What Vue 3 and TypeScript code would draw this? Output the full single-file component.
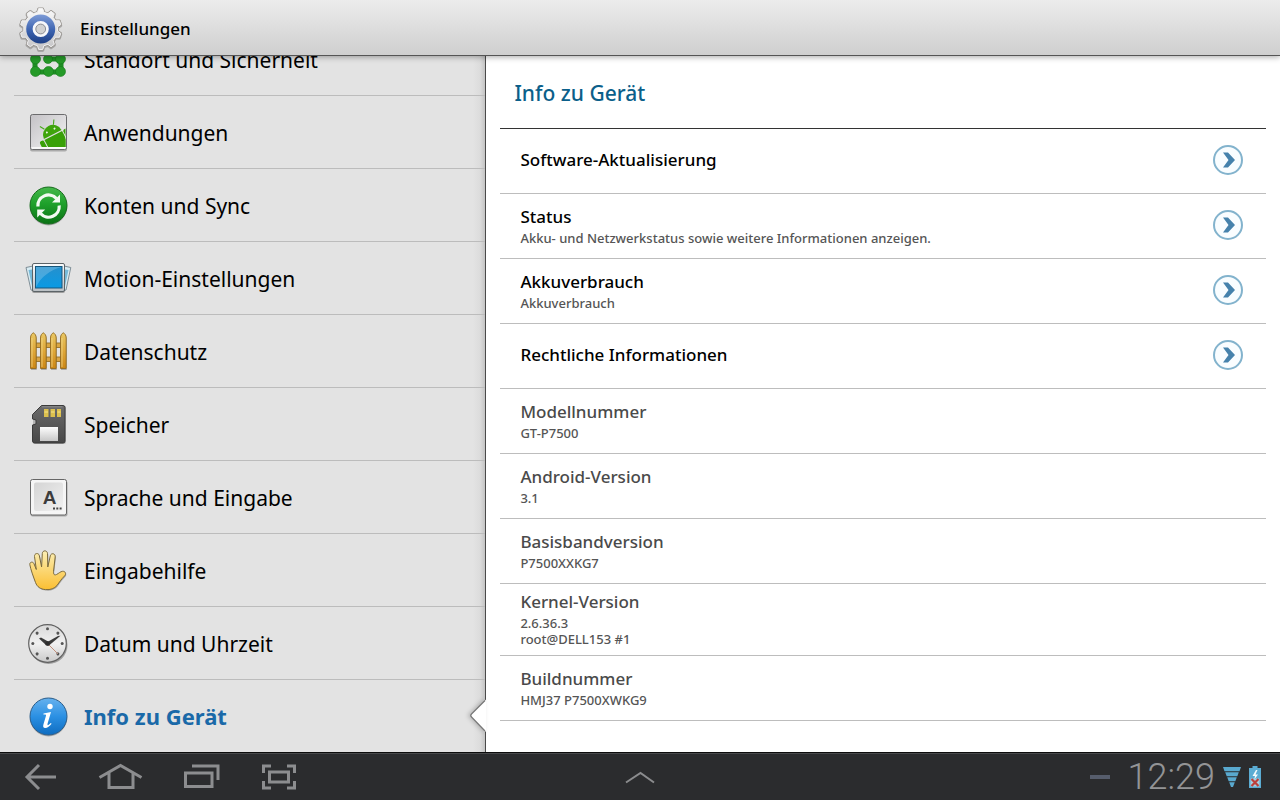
<script setup lang="ts">
import { ref } from 'vue'

interface Category {
  id: string
  label: string
}

interface Entry {
  title: string
  lines: string[]
  link: boolean
}

const categories: Category[] = [
  { id: 'security', label: 'Standort und Sicherheit' },
  { id: 'apps', label: 'Anwendungen' },
  { id: 'sync', label: 'Konten und Sync' },
  { id: 'motion', label: 'Motion-Einstellungen' },
  { id: 'privacy', label: 'Datenschutz' },
  { id: 'storage', label: 'Speicher' },
  { id: 'language', label: 'Sprache und Eingabe' },
  { id: 'access', label: 'Eingabehilfe' },
  { id: 'time', label: 'Datum und Uhrzeit' },
  { id: 'about', label: 'Info zu Gerät' },
]

const entries: Entry[] = [
  { title: 'Software-Aktualisierung', lines: [], link: true },
  { title: 'Status', lines: ['Akku- und Netzwerkstatus sowie weitere Informationen anzeigen.'], link: true },
  { title: 'Akkuverbrauch', lines: ['Akkuverbrauch'], link: true },
  { title: 'Rechtliche Informationen', lines: [], link: true },
  { title: 'Modellnummer', lines: ['GT-P7500'], link: false },
  { title: 'Android-Version', lines: ['3.1'], link: false },
  { title: 'Basisbandversion', lines: ['P7500XXKG7'], link: false },
  { title: 'Kernel-Version', lines: ['2.6.36.3', 'root@DELL153 #1'], link: false },
  { title: 'Buildnummer', lines: ['HMJ37 P7500XWKG9'], link: false },
]

const selected = ref('about')

// Outline of the cog: ten teeth round a circle
function cog(cx: number, cy: number, outer: number, inner: number, teeth: number): string {
  const step = (Math.PI * 2) / teeth
  const points: string[] = []
  const shape: [number, number][] = [
    [-0.3, inner],
    [-0.16, outer],
    [0.16, outer],
    [0.3, inner],
  ]
  for (let i = 0; i < teeth; i++) {
    for (const [offset, radius] of shape) {
      const a = (i + offset) * step - Math.PI / 2
      points.push(`${(cx + radius * Math.cos(a)).toFixed(2)} ${(cy + radius * Math.sin(a)).toFixed(2)}`)
    }
  }
  return `M${points.join('L')}Z`
}

const cogPath = cog(24.7, 24, 20.5, 17, 10)
const clockMarks = [0, 45, 90, 135, 180, 225, 270, 315]
const pickets = [6, 16, 26, 36]
</script>

<template>
  <div class="screen">
    <header class="topbar">
      <svg class="topbar-icon" viewBox="0 0 48 48" aria-hidden="true">
        <defs>
          <linearGradient id="cogMetal" x1="0" y1="0" x2="0" y2="1">
            <stop offset="0" stop-color="#fafafa" />
            <stop offset="1" stop-color="#c4c4c6" />
          </linearGradient>
          <linearGradient id="cogBlue" x1="0" y1="0" x2="0" y2="1">
            <stop offset="0" stop-color="#7d9bd6" />
            <stop offset="0.55" stop-color="#3c63b0" />
            <stop offset="1" stop-color="#1d3f85" />
          </linearGradient>
        </defs>
        <path :d="cogPath" fill="none" stroke="#8a8a8a" stroke-width="3" stroke-linejoin="round" transform="translate(0 1)" opacity="0.6" />
        <path :d="cogPath" fill="url(#cogMetal)" stroke="#999590" stroke-width="2.4" stroke-linejoin="round" />
        <path :d="cogPath" fill="url(#cogMetal)" stroke="#f2f2f3" stroke-width="1" stroke-linejoin="round" />
        <circle cx="24.7" cy="24" r="14.5" fill="url(#cogBlue)" />
        <circle cx="24.7" cy="24" r="6.4" fill="#cfcfd1" stroke="#f7f8fb" stroke-width="3.4" />
        <circle cx="24.7" cy="24" r="4.9" fill="#d2d2d2" stroke="#8d8f96" stroke-width="1" />
      </svg>
      <h1 class="topbar-title">Einstellungen</h1>
    </header>

    <main class="body">
      <nav class="sidebar" aria-label="Kategorien">
        <ul class="categories">
          <li v-for="item in categories" :key="item.id" class="category">
            <button
              type="button"
              class="category-button"
              :class="{ selected: item.id === selected }"
              :aria-current="item.id === selected ? 'page' : undefined"
              @click="selected = item.id"
            >
              <svg class="category-icon" viewBox="0 0 48 48" aria-hidden="true">
                <g v-if="item.id === 'security'">
                  <path d="M11 11V37H37V24H24M11 11H37" fill="none" stroke="#1f8f24" stroke-width="5" />
                  <g fill="#259a28" stroke="#14781a" stroke-width="0.6">
                    <circle cx="11" cy="11" r="5" /><circle cx="24" cy="11" r="5" /><circle cx="37" cy="11" r="5" />
                    <circle cx="11.5" cy="24" r="5" /><circle cx="24" cy="24" r="4.5" /><circle cx="36.500" cy="24" r="5" />
                    <circle cx="11.5" cy="36.500" r="5" /><circle cx="24.5" cy="36.500" r="5" /><circle cx="36.500" cy="36.500" r="5" />
                  </g>
                </g>

                <g v-else-if="item.id === 'apps'">
                  <defs>
                    <linearGradient id="appTile" x1="0" y1="0" x2="1" y2="1">
                      <stop offset="0" stop-color="#c3c1c5" />
                      <stop offset="1" stop-color="#f6f6f6" />
                    </linearGradient>
                    <clipPath id="appClip"><rect x="7.5" y="7" width="34" height="32" /></clipPath>
                  </defs>
                  <rect x="6" y="7.5" width="37" height="36" rx="2" fill="#000" opacity="0.25" />
                  <rect x="6.5" y="6.5" width="36" height="35" rx="2" fill="url(#appTile)" stroke="#6b6b6d" />
                  <path d="M7.5 40H41.5" stroke="#fff" stroke-width="1.500" />
                  <g clip-path="url(#appClip)">
                    <g transform="translate(29 27) rotate(-27) scale(1.12)">
                      <path d="M-8.800 -0.600A8.800 8.400 0 0 1 8.800 -0.600Z" fill="#3fa40c" />
                      <path d="M-4.500 -8L-7 -12M4.500 -8L7 -12" stroke="#4aa81c" stroke-width="1" />
                      <circle cx="-3.800" cy="-4.500" r="0.900" fill="#e9f5df" />
                      <circle cx="3.800" cy="-4.500" r="0.900" fill="#e9f5df" />
                      <path d="M-8.800 0.600H8.800V17H-8.800Z" fill="#39a008" />
                      <rect x="-13.800" y="0" width="4.200" height="14" rx="2" fill="#39a008" />
                      <rect x="9.600" y="0" width="4.600" height="16" rx="2" fill="#39a008" />
                    </g>
                    <path d="M24 39H44V30Z" fill="#39a008" />
                  </g>
                </g>

                <g v-else-if="item.id === 'sync'">
                  <defs>
                    <linearGradient id="syncDisc" x1="0" y1="0" x2="0" y2="1">
                      <stop offset="0" stop-color="#46b84b" />
                      <stop offset="0.45" stop-color="#1fa12b" />
                      <stop offset="1" stop-color="#0b7215" />
                    </linearGradient>
                  </defs>
                  <circle cx="24.5" cy="26" r="18.500" fill="#000" opacity="0.25" />
                  <circle cx="24.5" cy="24.5" r="18.500" fill="url(#syncDisc)" stroke="#166b1c" />
                  <g fill="none" stroke="#f3faf2" stroke-width="3.200">
                    <path d="M13.900 25.500A10.700 10.700 0 0 1 32.500 17.500" />
                    <path d="M35.200 24.500A10.700 10.700 0 0 1 16.500 32.500" />
                  </g>
                  <path d="M36 13.500V21.500H28Z" fill="#f3faf2" />
                  <path d="M13.200 36.500V28.500H21.200Z" fill="#f3faf2" />
                </g>

                <g v-else-if="item.id === 'motion'">
                  <defs>
                    <linearGradient id="motionScreen" x1="0" y1="0" x2="0" y2="1">
                      <stop offset="0" stop-color="#2590cd" />
                      <stop offset="1" stop-color="#0a9ae4" />
                    </linearGradient>
                    <linearGradient id="motionFrame" x1="0" y1="0" x2="0" y2="1">
                      <stop offset="0" stop-color="#fbfdfe" />
                      <stop offset="1" stop-color="#b9bfc3" />
                    </linearGradient>
                  </defs>
                  <path d="M2 13.500L9 12V36.500L7 36Z" fill="#d8ecf3" stroke="#75858d" stroke-width="0.900" />
                  <path d="M46.800 13.500L40 12V36.500L42 36Z" fill="#d8ecf3" stroke="#75858d" stroke-width="0.900" />
                  <path d="M4.500 16L8 15.500V32ZM44.500 16L41 15.500V32Z" fill="#77bad8" />
                  <rect x="8" y="11" width="33" height="28" rx="2" fill="#000" opacity="0.3" />
                  <rect x="8.500" y="9.500" width="32" height="28" rx="1.500" fill="url(#motionFrame)" stroke="#5c6468" />
                  <rect x="11.500" y="12.500" width="26.500" height="21.500" fill="url(#motionScreen)" stroke="#17577c" />
                  <path d="M12 33V13H37.500C26 16 17 23 12 33Z" fill="#fff" opacity="0.2" />
                </g>

                <g v-else-if="item.id === 'privacy'">
                  <defs>
                    <linearGradient id="fenceWood" x1="0" y1="0" x2="0" y2="1">
                      <stop offset="0" stop-color="#e9c763" />
                      <stop offset="0.5" stop-color="#dfa83a" />
                      <stop offset="1" stop-color="#cc8614" />
                    </linearGradient>
                  </defs>
                  <g fill="#d9a644" stroke="#94702c" stroke-width="0.900">
                    <rect x="9" y="16" width="31" height="4.500" />
                    <rect x="9" y="30" width="31" height="4.500" />
                  </g>
                  <g v-for="x in pickets" :key="x" :transform="`translate(${x} 0)`">
                    <path d="M0.500 11C0.500 8 2 6.500 3.300 5.800C4.600 6.500 6.200 8 6.200 11V42H0.500Z" transform="translate(0.500 1)" fill="#000" opacity="0.25" />
                    <path d="M0.500 11C0.500 8 2 6.500 3.300 5.800C4.600 6.500 6.200 8 6.200 11V41.500H0.500Z" fill="url(#fenceWood)" stroke="#916a20" stroke-width="0.900" />
                    <path d="M2 11V40" stroke="#f2dc92" stroke-width="1" opacity="0.700" />
                  </g>
                </g>

                <g v-else-if="item.id === 'storage'">
                  <defs>
                    <linearGradient id="cardBody" x1="0" y1="0" x2="0" y2="1">
                      <stop offset="0" stop-color="#6b6b6b" />
                      <stop offset="1" stop-color="#474747" />
                    </linearGradient>
                    <linearGradient id="cardLabel" x1="0" y1="0" x2="0" y2="1">
                      <stop offset="0" stop-color="#fdfdfd" />
                      <stop offset="1" stop-color="#c7c7c7" />
                    </linearGradient>
                  </defs>
                  <path d="M17 6H40Q42 6 42 8V42Q42 44 40 44H11Q9 44 9 42V14Z" fill="#000" opacity="0.2" />
                  <path d="M17.500 5.500H39Q41 5.500 41 7.500V41Q41 43 39 43H10.500Q8.500 43 8.500 41V25L12 24V20L8.500 19V14.500Z" fill="url(#cardBody)" stroke="#3b3b3b" />
                  <path d="M18 6.800H38.500" stroke="#8f8f8f" />
                  <path d="M20 9H24.500V17H20ZM26.500 9H31V17H26.500ZM33 9H37V17H33Z" fill="#dcc04e" />
                  <path d="M20.500 12H24M27 12H30.500M33.500 12H36.500" stroke="#f5e48d" />
                  <rect x="16" y="27" width="18" height="14" fill="url(#cardLabel)" />
                </g>

                <g v-else-if="item.id === 'language'">
                  <defs>
                    <linearGradient id="keyFace" x1="0" y1="0" x2="1" y2="1">
                      <stop offset="0" stop-color="#d4d4d4" />
                      <stop offset="1" stop-color="#f1f1f1" />
                    </linearGradient>
                  </defs>
                  <rect x="6.500" y="8" width="37" height="35.500" rx="2" fill="#000" opacity="0.25" />
                  <rect x="6.500" y="6.500" width="36" height="35.500" rx="2" fill="#f5f5f5" stroke="#666" />
                  <rect x="10" y="9.500" width="29" height="28.500" rx="2" fill="url(#keyFace)" />
                  <text x="25.500" y="31" class="key-letter">A</text>
                  <path d="M29 34.500H31V36.500H29ZM32.300 34.500H34.300V36.500H32.300ZM35.600 34.500H37.600V36.500H35.600Z" fill="#444" />
                </g>

                <g v-else-if="item.id === 'access'">
                  <defs>
                    <linearGradient id="handSkin" x1="0" y1="0" x2="0" y2="1">
                      <stop offset="0" stop-color="#fbeeb4" />
                      <stop offset="1" stop-color="#fbbf32" />
                    </linearGradient>
                  </defs>
                  <path
                    d="M11.500 36.500C9.500 31 6.500 23 5.800 18.500C5.500 15.800 9 15.400 9.900 17.500L12.300 23.500L10.500 10.500C10.200 7 14.600 6.500 15.300 9.500L17.600 21L18.300 7.500C18.500 4 23.300 4 23.500 7.500L23.800 21L26.300 9.800C27.100 6.600 31.500 7.300 31.200 10.800L29.500 25.500C29.300 28.500 30.500 29.500 32.500 28.500C35 27.200 36.500 25.500 38.500 25.300C41.500 25 42.600 28 40.500 30C37 33.500 35.500 36 33 39.500C30.500 42.500 26.500 44 21.500 43.600C16.500 43.200 13.200 41 11.500 36.500Z"
                    transform="translate(0.700 1)" fill="#000" opacity="0.25"
                  />
                  <path
                    d="M11.500 36.500C9.500 31 6.500 23 5.800 18.500C5.500 15.800 9 15.400 9.900 17.500L12.300 23.500L10.500 10.500C10.200 7 14.600 6.500 15.300 9.500L17.600 21L18.300 7.500C18.500 4 23.300 4 23.500 7.500L23.800 21L26.300 9.800C27.100 6.600 31.500 7.300 31.200 10.800L29.500 25.500C29.300 28.500 30.500 29.500 32.500 28.500C35 27.200 36.500 25.500 38.500 25.300C41.500 25 42.600 28 40.500 30C37 33.500 35.500 36 33 39.500C30.500 42.500 26.500 44 21.500 43.600C16.500 43.200 13.200 41 11.500 36.500Z"
                    fill="url(#handSkin)" stroke="#7b6a3c" stroke-width="1" stroke-linejoin="round"
                  />
                </g>

                <g v-else-if="item.id === 'time'">
                  <defs>
                    <linearGradient id="dial" x1="0" y1="0" x2="0" y2="1">
                      <stop offset="0" stop-color="#d9d9d9" />
                      <stop offset="0.500" stop-color="#f1f1f1" />
                      <stop offset="1" stop-color="#c9c9c9" />
                    </linearGradient>
                  </defs>
                  <circle cx="24.5" cy="26" r="19" fill="#000" opacity="0.3" />
                  <circle cx="23.500" cy="24.500" r="18.800" fill="url(#dial)" stroke="#606060" stroke-width="1.200" />
                  <circle v-for="a in clockMarks" :key="a" cx="23.500" cy="9.800" r="1.500" fill="#555" :transform="`rotate(${a} 23.5 24.5)`" />
                  <path d="M23.500 24.500L34 35" stroke="#c08d78" stroke-width="1" />
                  <path d="M25 23L17 18.500L15 19.500L22.500 26.500Z" fill="#3b3b3b" />
                  <path d="M22.500 23.500L34 17L36.500 16.800L25 26.500L23.500 27Z" fill="#3b3b3b" />
                  <circle cx="23.500" cy="24.500" r="2.300" fill="#2d2d2d" />
                </g>

                <g v-else>
                  <defs>
                    <linearGradient id="infoDisc" x1="0" y1="0" x2="0" y2="1">
                      <stop offset="0" stop-color="#67b2ee" />
                      <stop offset="0.500" stop-color="#2b90e3" />
                      <stop offset="1" stop-color="#0e6cc0" />
                    </linearGradient>
                  </defs>
                  <circle cx="24.5" cy="26" r="18.500" fill="#000" opacity="0.25" />
                  <circle cx="24.5" cy="24.500" r="18.500" fill="url(#infoDisc)" stroke="#2b5d8a" />
                  <circle cx="26" cy="14.500" r="2.700" fill="#fff" />
                  <path d="M19.500 21.500L27 20L23.600 31.500C23.200 33.200 23.800 33.500 24.700 32.800L26.800 31L27.600 31.800C25.500 34.500 23.500 36 21.200 36C19.300 36 18.800 34.600 19.400 32.500L22 23.800C22.300 22.600 21.500 22.300 19.400 22.500Z" fill="#fff" />
                </g>
              </svg>
              <span class="category-label">{{ item.label }}</span>
            </button>
            <svg v-if="item.id === selected" class="pointer" viewBox="0 0 20 40" aria-hidden="true">
              <path d="M20 3.500L5.500 18Q4 19.500 5.500 21L20 36Z" fill="#fff" />
              <path d="M19 4.500L5.500 18Q4 19.500 5.500 21L19 35" fill="none" stroke="#777" stroke-width="1.200" />
            </svg>
          </li>
        </ul>
      </nav>

      <section class="detail">
        <h2 class="detail-title">Info zu Gerät</h2>
        <ul class="entries">
          <li v-for="entry in entries" :key="entry.title" class="entry">
            <component :is="entry.link ? 'button' : 'div'" :type="entry.link ? 'button' : undefined" class="entry-row" :class="{ linked: entry.link }">
              <span class="entry-text">
                <span class="entry-title">{{ entry.title }}</span>
                <span v-for="line in entry.lines" :key="line" class="entry-line">{{ line }}</span>
              </span>
              <svg v-if="entry.link" class="chevron" viewBox="0 0 32 32" aria-hidden="true">
                <circle cx="16" cy="16" r="14" fill="#f9fdff" stroke="#83b3cd" stroke-width="2" />
                <path d="M11 8.500H16L23 16L16 23.500H11L16.500 16Z" fill="#4682ac" />
              </svg>
            </component>
          </li>
        </ul>
      </section>
    </main>

    <footer class="systembar">
      <div class="nav-buttons">
        <button type="button" class="nav-button" aria-label="Zurück">
          <svg class="nav-icon" viewBox="0 0 48 32"><path d="M23 4L11 16L23 28M11 16H40" /></svg>
        </button>
        <button type="button" class="nav-button" aria-label="Startseite">
          <svg class="nav-icon" viewBox="0 0 48 32"><path d="M3.500 16.500L24.500 4.500L45.500 16.500M13 12V26.500H37V12" /></svg>
        </button>
        <button type="button" class="nav-button" aria-label="Letzte Anwendungen">
          <svg class="nav-icon" viewBox="0 0 48 32"><path d="M16 5H42V19M9.500 12H36V25.500H9.500Z" /></svg>
        </button>
        <button type="button" class="nav-button" aria-label="Bildschirmfoto">
          <svg class="nav-icon" viewBox="0 0 48 32">
            <path d="M7.500 12V5H15M31 5H38.500V12M38.500 20V27H31M15 27H7.500V20M13.500 11H32.500V21H13.500Z" />
          </svg>
        </button>
      </div>

      <button type="button" class="drawer-button" aria-label="Mini-Anwendungen">
        <svg class="drawer-icon" viewBox="0 0 32 16"><path d="M2 13.500L16.500 4L30 13.500" /></svg>
      </button>

      <div class="status">
        <span class="dash"></span>
        <time class="clock">12:29</time>
        <svg class="signal" viewBox="0 0 18 20" aria-hidden="true">
          <path d="M0 0H18L16.500 4.200H1.500ZM2.200 5.200H15.800L14.300 9.200H3.700ZM4.200 10.200H13.800L12.300 14.200H5.700ZM6.200 15.200H11.800L10 20H8Z" fill="#59a9cf" />
        </svg>
        <svg class="battery" viewBox="0 0 12 22" aria-hidden="true">
          <path d="M3.500 0H8.500V2H12V22H0V2H3.500Z" fill="#5bacd3" />
          <path d="M7 4L3.500 10H6L5 14L9 8.500H6.500L8.500 4Z" fill="#f4fafc" />
          <rect x="1.500" y="12.500" width="9" height="8" fill="#a9cfdf" />
          <path d="M2.500 13L9.500 20M9.500 13L2.500 20" stroke="#bd3f3b" stroke-width="2.200" />
        </svg>
      </div>
    </footer>
  </div>
</template>

<style>
html,
body {
  margin: 0;
  background: #fff;
}
</style>

<style scoped>
.screen {
  display: flex;
  flex-direction: column;
  height: 100vh;
  overflow: hidden;
  color: #000;
  font-family: 'Noto Sans', 'Open Sans', sans-serif;
}

button {
  margin: 0;
  padding: 0;
  border: 0;
  background: none;
  color: inherit;
  font: inherit;
  text-align: left;
  cursor: pointer;
}

ul {
  margin: 0;
  padding: 0;
  list-style: none;
}

svg {
  display: block;
  flex: none;
}

.topbar {
  position: relative;
  z-index: 2;
  display: flex;
  align-items: center;
  gap: 16px;
  box-sizing: border-box;
  height: 56px;
  padding: 2px 16px 0;
  border-bottom: 1px solid #555;
  background: linear-gradient(#ececec, #cfcfcf);
  box-shadow: 0 1px 6px rgba(0, 0, 0, 0.35);
}

.topbar-icon {
  width: 48px;
  height: 48px;
}

.topbar-title {
  margin: 0;
  font-size: 17px;
  font-weight: 500;
}

.body {
  display: flex;
  flex: 1;
  min-height: 0;
}

.sidebar {
  display: flex;
  flex: 0 0 38%;
  flex-direction: column;
  justify-content: flex-end;
  box-sizing: border-box;
  border-right: 1px solid #4a4a4a;
  background: linear-gradient(to left, #c4c4c4, #dcdcdc 5px, #e3e3e3 12px);
}

.category {
  position: relative;
  margin-left: 14px;
  border-top: 1px solid #bcbcbc;
}

.category-button {
  display: flex;
  align-items: center;
  gap: 12px;
  width: 100%;
  height: 72px;
  padding-left: 10px;
  font-size: 21px;
}

.category-label {
  padding-top: 2px;
}

.category-icon {
  width: 48px;
  height: 48px;
}

.category-button.selected {
  color: #1a69a8;
  font-size: 22px;
  font-weight: 700;
}

.selected .category-label {
  padding-top: 0;
}

.key-letter {
  fill: #3c3c3c;
  font-family: 'Liberation Sans', Arial, sans-serif;
  font-size: 19px;
  font-weight: 700;
  text-anchor: middle;
}

.pointer {
  position: absolute;
  top: 16px;
  right: -1px;
  width: 20px;
  height: 40px;
  filter: drop-shadow(-2px 0 2px rgba(0, 0, 0, 0.2));
}

.detail {
  flex: 1;
  min-width: 0;
  padding: 0 14px;
  overflow: hidden;
  background: #fff;
}

.detail-title {
  box-sizing: border-box;
  height: 73px;
  margin: 0;
  padding: 0 14px;
  border-bottom: 1px solid #333;
  color: #0b5f8a;
  font-size: 21px;
  font-weight: 500;
  line-height: 74px;
}

.entry {
  border-bottom: 1px solid #bdbdbd;
}

.entry-row {
  display: flex;
  align-items: center;
  justify-content: space-between;
  box-sizing: border-box;
  width: 100%;
  min-height: 64px;
  padding: 5px 22px 8px 20px;
  color: #4a4a4a;
  font-weight: 500;
}

.entry-row.linked {
  color: #000;
}

.entry-text {
  display: flex;
  flex-direction: column;
}

.entry-title {
  font-size: 17px;
  line-height: 26px;
}

.entry-line {
  color: #555;
  font-size: 13px;
  line-height: 16px;
}

.chevron {
  width: 32px;
  height: 32px;
}

.systembar {
  display: grid;
  grid-template-columns: 1fr auto 1fr;
  align-items: center;
  box-sizing: border-box;
  height: 48px;
  border-top: 1px solid #0c0c0c;
  background: #2b2c2e;
  box-shadow: inset 0 1px 0 #48494b;
}

.nav-buttons {
  display: flex;
}

.nav-button {
  display: flex;
  justify-content: center;
  width: 80px;
}

.nav-icon {
  width: 48px;
  height: 32px;
  fill: none;
  stroke: #8c8d8f;
  stroke-width: 3;
}

.drawer-icon {
  width: 32px;
  height: 16px;
  fill: none;
  stroke: #8b8c8e;
  stroke-width: 2;
}

.status {
  display: flex;
  align-items: center;
  justify-content: flex-end;
  gap: 8px;
  padding-right: 19px;
}

.dash {
  width: 20px;
  height: 4px;
  margin-right: 10px;
  background: #565d6c;
}

.clock {
  color: #939496;
  font-family: Roboto, 'Liberation Sans', sans-serif;
  font-size: 36px;
  font-weight: 300;
  line-height: 46px;
}

.signal {
  width: 18px;
  height: 20px;
}

.battery {
  width: 12px;
  height: 22px;
}
</style>
